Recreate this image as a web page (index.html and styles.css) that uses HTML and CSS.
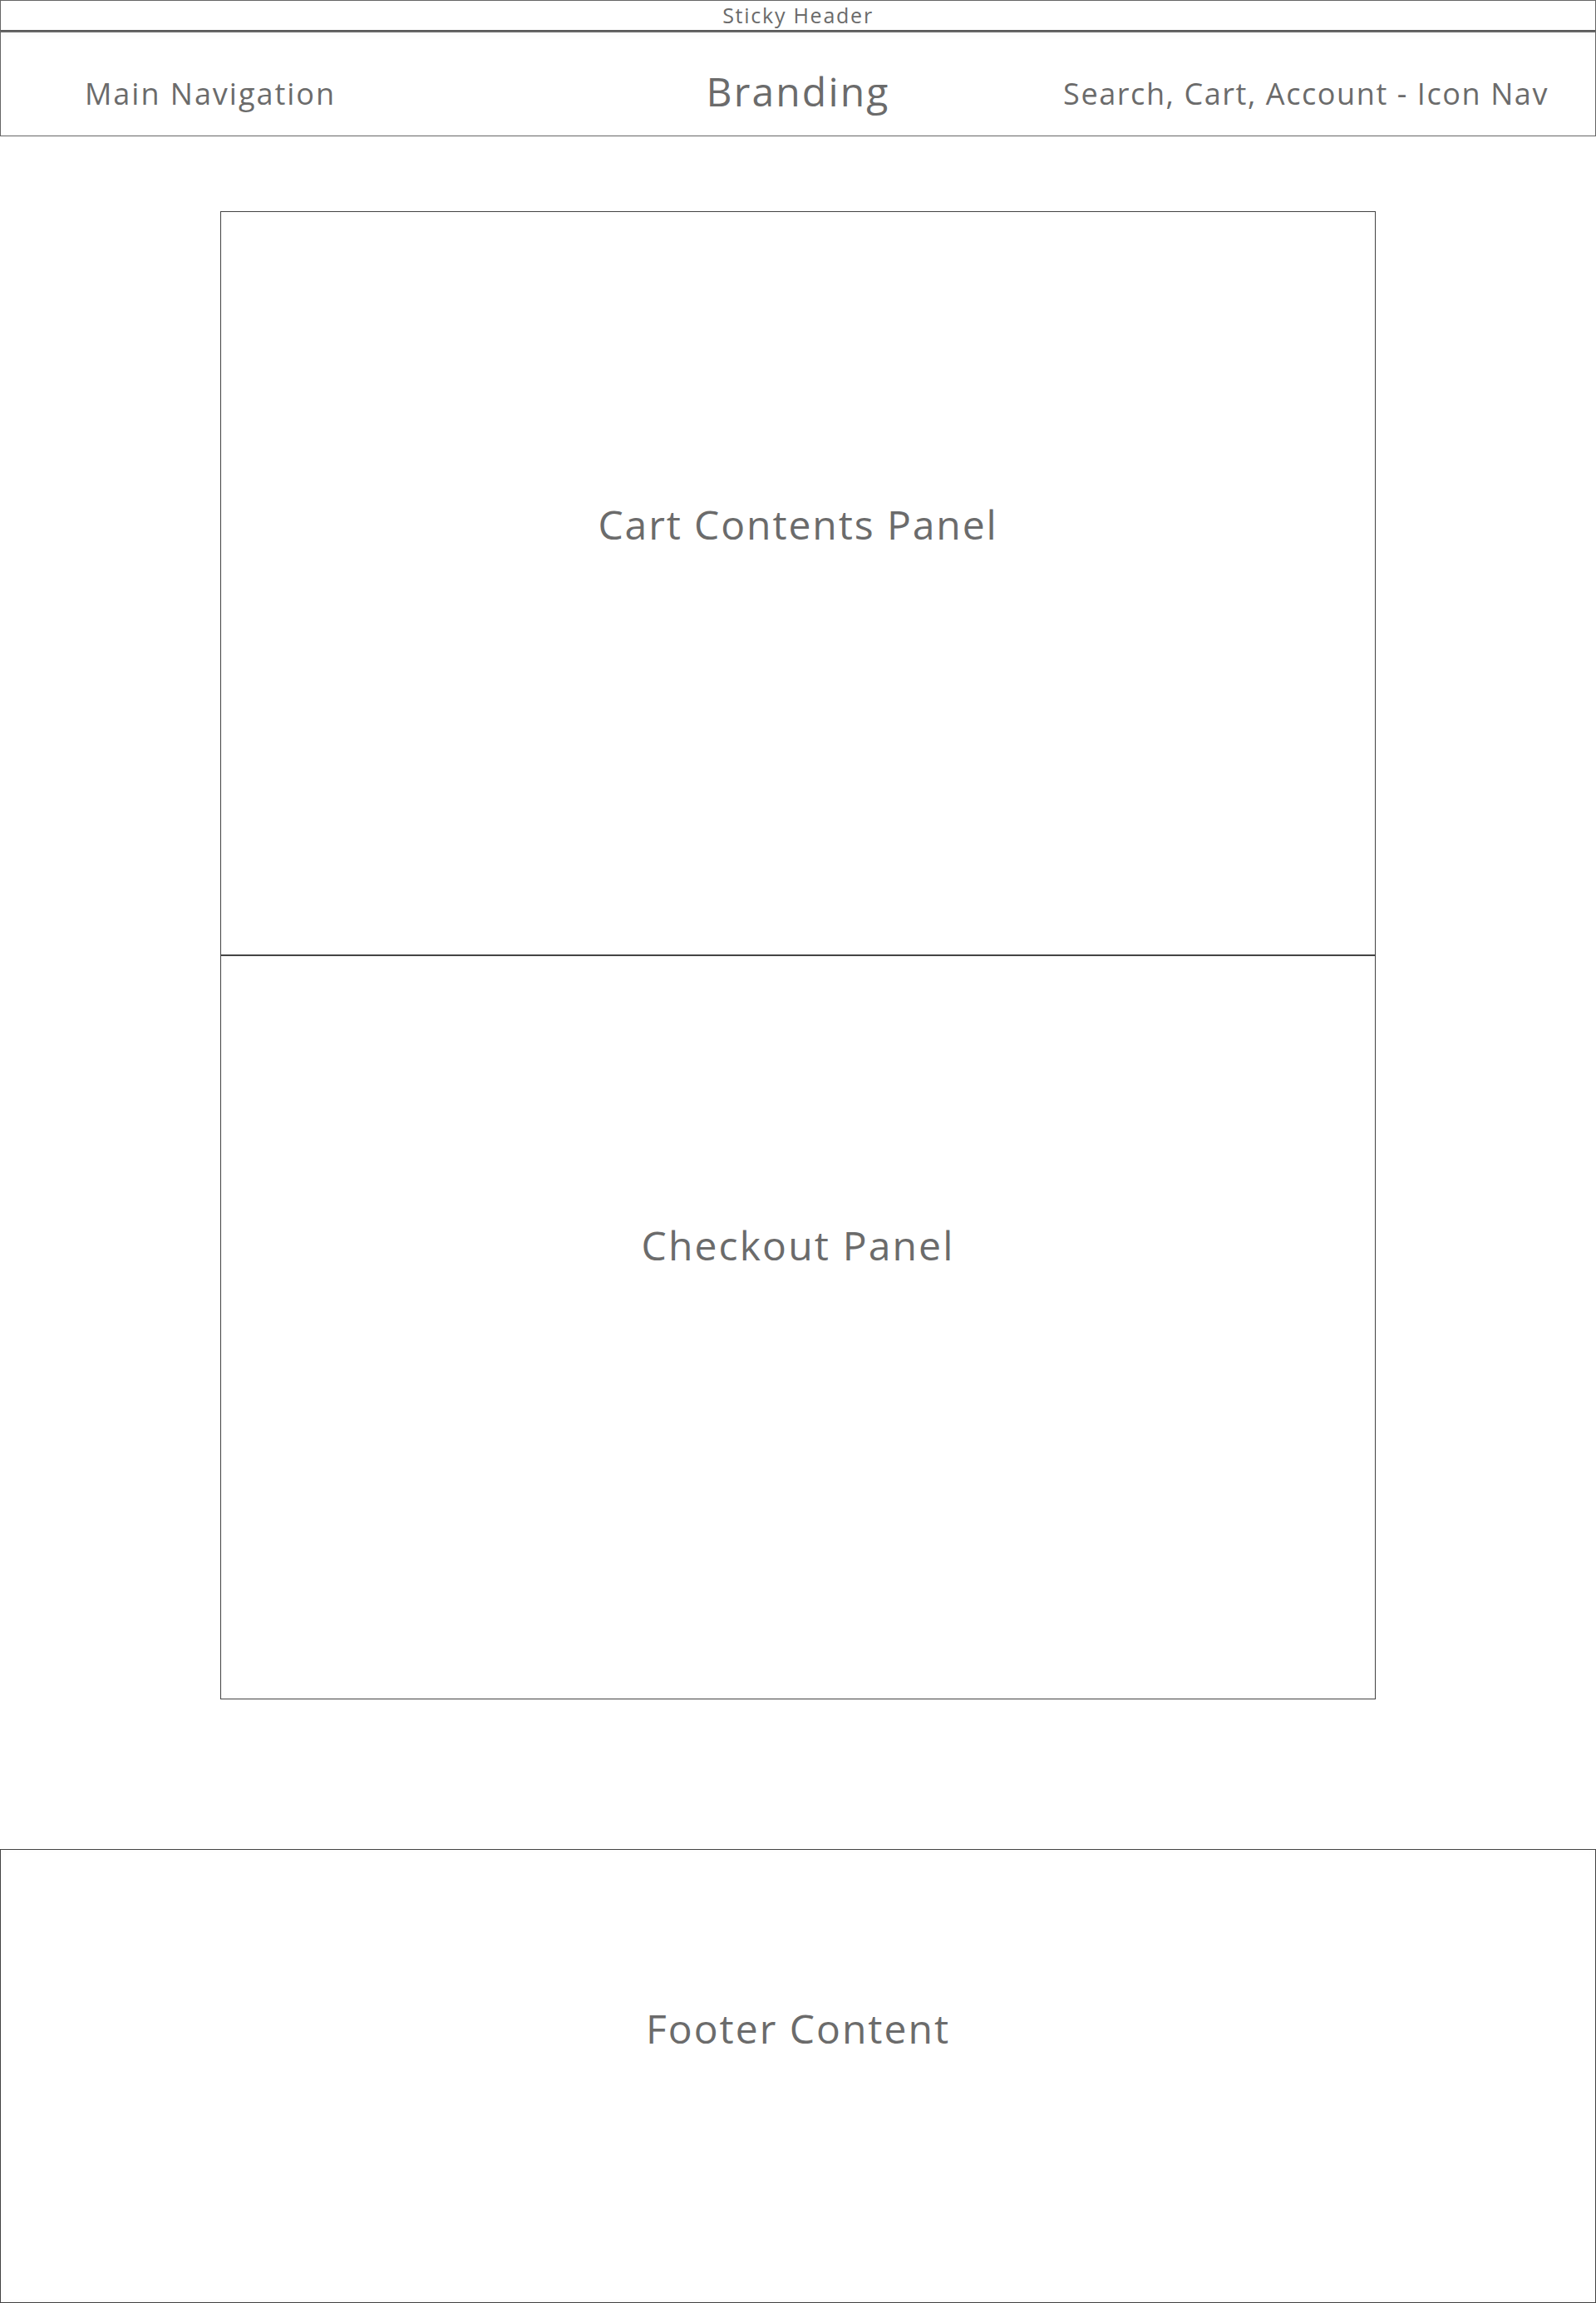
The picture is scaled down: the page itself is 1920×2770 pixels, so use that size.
FILE: index.html
```html
<!DOCTYPE html>
<html lang="en">
<head>
<meta charset="utf-8">
<title>Cart Wireframe</title>
<link rel="stylesheet" href="styles.css">
</head>
<body>
<header class="sticky">
  <div class="sticky-bar">Sticky Header</div>
  <div class="nav-bar">
    <div class="nav-main">Main Navigation</div>
    <div class="nav-brand">Branding</div>
    <div class="nav-icons">Search, Cart, Account - Icon Nav</div>
  </div>
</header>
<main class="content">
  <section class="panel panel-cart"><span class="panel-label label-cart">Cart Contents Panel</span></section>
  <section class="panel panel-checkout"><span class="panel-label">Checkout Panel</span></section>
</main>
<footer class="footer"><span class="footer-label">Footer Content</span></footer>
</body>
</html>
```
FILE: styles.css
```css
html, body {
  margin: 0;
  padding: 0;
  background: #ffffff;
}
body {
  font-family: "Open Sans", "Liberation Sans", sans-serif;
  color: #6b6b6b;
  width: 1920px;
  height: 2770px;
  box-sizing: border-box;
}
.sticky-bar {
  height: 37px;
  box-sizing: border-box;
  border: 1px solid #666;
  border-bottom: 1px solid #555;
  display: flex;
  align-items: center;
  justify-content: center;
  font-size: 25px;
  letter-spacing: 0.07em;
  line-height: 1;
}
.nav-bar {
  height: 127px;
  box-sizing: border-box;
  border: 1px solid #666;
  border-top: 2px solid #666;
  display: grid;
  grid-template-columns: 1fr auto 1fr;
  align-items: center;
  padding: 22px 58px 0 58px;
  font-size: 36px;
  letter-spacing: 0.055em;
  box-shadow: inset 0 4px 8px rgba(0,0,0,0.02);
}
.nav-main { justify-self: start; margin-left: 43px; }
.nav-brand { font-size: 48px; letter-spacing: 0.045em; margin-top: -6px; }
.nav-icons { justify-self: end; margin-right: -2px; letter-spacing: 0.044em; }
.content {
  width: 1390px;
  margin: 90px auto 0;
  display: flex;
  flex-direction: column;
}
.panel {
  box-sizing: border-box;
  border: 1px solid #444;
  display: flex;
  justify-content: center;
  box-shadow: inset 0 0 10px rgba(0,0,0,0.02);
}
.panel-cart {
  height: 895px;
  padding-top: 348px;
}
.panel-checkout {
  height: 896px;
  margin-top: -1px;
  border-top: 2px solid #444;
  padding-top: 320px;
}
.panel-label {
  font-size: 48px;
  letter-spacing: 0.045em;
  line-height: 56px;
  height: 56px;
}
.label-cart { letter-spacing: 0.04em; }
.footer {
  margin-top: 180px;
  height: 546px;
  box-sizing: border-box;
  border: 1px solid #444;
  display: flex;
  justify-content: center;
  padding-top: 187px;
  box-shadow: inset 0 0 10px rgba(0,0,0,0.02);
}
.footer-label {
  font-size: 48px;
  letter-spacing: 0.042em;
  line-height: 56px;
  height: 56px;
}
```
